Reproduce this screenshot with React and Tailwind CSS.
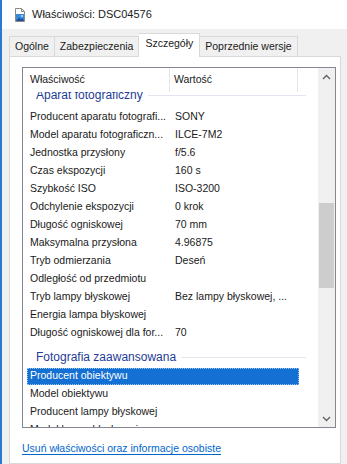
import React from "react";

const camera = [
  ["Producent aparatu fotografi...", "SONY"],
  ["Model aparatu fotograficzn...", "ILCE-7M2"],
  ["Jednostka przysłony", "f/5.6"],
  ["Czas ekspozycji", "160 s"],
  ["Szybkość ISO", "ISO-3200"],
  ["Odchylenie ekspozycji", "0 krok"],
  ["Długość ogniskowej", "70 mm"],
  ["Maksymalna przysłona", "4.96875"],
  ["Tryb odmierzania", "Deseń"],
  ["Odległość od przedmiotu", ""],
  ["Tryb lampy błyskowej", "Bez lampy błyskowej, ..."],
  ["Energia lampa błyskowej", ""],
  ["Długość ogniskowej dla for...", "70"],
];

const advanced = [
  ["Producent obiektywu", "", true],
  ["Model obiektywu", ""],
  ["Producent lampy błyskowej", ""],
  ["Model lampy błyskowej", ""],
  ["Numer seryjny aparatu", ""],
];

function GroupHeading({ title }) {
  return (
    <div className="h-[25px] pt-[6px]">
      <div className="h-[18px] flex items-center pl-[13px] pr-[12px] gap-[5px]">
        <span className="text-[12px] text-[#1e3c96] whitespace-nowrap">{title}</span>
        <div className="flex-1 h-px bg-[#e2e6ef]" />
      </div>
    </div>
  );
}

function Row({ name, value, selected }) {
  if (selected) {
    return (
      <div className="h-[18px] flex items-center">
        <div className="ml-[4px] w-[272px] h-[17px] bg-[#1470d2] outline-1 outline-dotted outline-[#9cc6f2] -outline-offset-1 flex items-center pl-[3px] text-white">
          {name}
        </div>
      </div>
    );
  }
  return (
    <div className="h-[18px] flex items-center text-[#1a1a1a]">
      <div className="w-[147px] pl-[7px] whitespace-nowrap overflow-hidden">{name}</div>
      <div className="pl-[5px] whitespace-nowrap">{value}</div>
    </div>
  );
}

function PictureIcon() {
  return (
    <svg width="16" height="16" viewBox="0 0 16 16">
      <path d="M3.5 1.5h6l3 3v10h-9z" fill="#fff" stroke="#8a8a8a" />
      <path d="M9.5 1.5v3h3" fill="none" stroke="#8a8a8a" />
      <rect x="4" y="7" width="8" height="7" fill="#3b8ad8" />
      <path d="M4 14l3-3.5 2 2 1.5-1.5 1.5 3z" fill="#1d4f9a" />
      <circle cx="10" cy="9" r="0.9" fill="#dff0ff" />
    </svg>
  );
}

export default function App() {
  return (
    <div className="w-[347px] h-[464px] flex bg-[#f0f0f0] overflow-hidden font-['Liberation_Sans',Arial,sans-serif]">
      <div className="w-[2px] bg-[#2a7bd0]" />
      <div className="flex-1 flex flex-col min-w-0">
        {/* title bar */}
        <div className="h-[29px] bg-white flex items-center pl-[10px] gap-[4px]">
          <PictureIcon />
          <span className="text-[11px] text-[#1a1a1a]">Właściwości: DSC04576</span>
        </div>

        {/* tabs */}
        <div className="h-[27px] pl-[7px] flex items-end text-[10.5px] text-[#1a1a1a]">
          <div className="h-[20px] px-[5px] flex items-center border border-b-0 border-[#d9d9d9] bg-[#f0f0f0]">Ogólne</div>
          <div className="h-[20px] px-[5px] flex items-center border border-l-0 border-b-0 border-[#d9d9d9] bg-[#f0f0f0]">Zabezpieczenia</div>
          <div className="h-[24px] px-[6px] pb-[3px] flex items-center border border-l-0 border-b-0 border-[#d9d9d9] bg-white relative z-10 -mb-px">Szczegóły</div>
          <div className="h-[20px] px-[5px] flex items-center border border-l-0 border-b-0 border-[#d9d9d9] bg-[#f0f0f0]">Poprzednie wersje</div>
        </div>

        {/* panel */}
        <div className="flex-1 ml-[7px] w-[332px] bg-white border border-[#d9d9d9] pl-[12px] pt-[10px]">
          <div className="w-[314px] h-[361px] border border-[#828790] flex text-[10.5px]">
            <div className="w-[295px] flex flex-col">
              <div className="h-[24px] flex items-center text-[#1a1a1a] shrink-0 bg-white relative z-10">
                <div className="w-[147px] h-full pl-[7px] flex items-center border-r border-[#e5e5e5]">Właściwość</div>
                <div className="w-[128px] h-full pl-[4px] flex items-center border-r border-[#e5e5e5]">Wartość</div>
              </div>
              <div className="flex-1 overflow-hidden">
                <div className="-mt-[12px]">
                  <div className="mb-[3px]">
                    <GroupHeading title="Aparat fotograficzny" />
                  </div>
                  {camera.map(([n, v]) => (
                    <Row key={n} name={n} value={v} />
                  ))}
                  <GroupHeading title="Fotografia zaawansowana" />
                  {advanced.map(([n, v, s]) => (
                    <Row key={n} name={n} value={v} selected={s} />
                  ))}
                </div>
              </div>
            </div>
            {/* scrollbar */}
            <div className="w-[17px] bg-[#f0f0f0] flex flex-col">
              <div className="h-[17px] flex items-center justify-center">
                <svg width="9" height="6" viewBox="0 0 9 6">
                  <path d="M1 5l3.5-3.5L8 5" fill="none" stroke="#606060" strokeWidth="1.3" />
                </svg>
              </div>
              <div className="flex-1 px-[1px]">
                <div className="mt-[118px] h-[85px] bg-[#cdcdcd]" />
              </div>
              <div className="h-[17px] flex items-center justify-center">
                <svg width="9" height="6" viewBox="0 0 9 6">
                  <path d="M1 1l3.5 3.5L8 1" fill="none" stroke="#606060" strokeWidth="1.3" />
                </svg>
              </div>
            </div>
          </div>
          <div className="mt-[12px] text-[10.5px] leading-[16px]">
            <span className="text-[#0066cc] underline underline-offset-2">Usuń właściwości oraz informacje osobiste</span>
          </div>
        </div>
      </div>
    </div>
  );
}
